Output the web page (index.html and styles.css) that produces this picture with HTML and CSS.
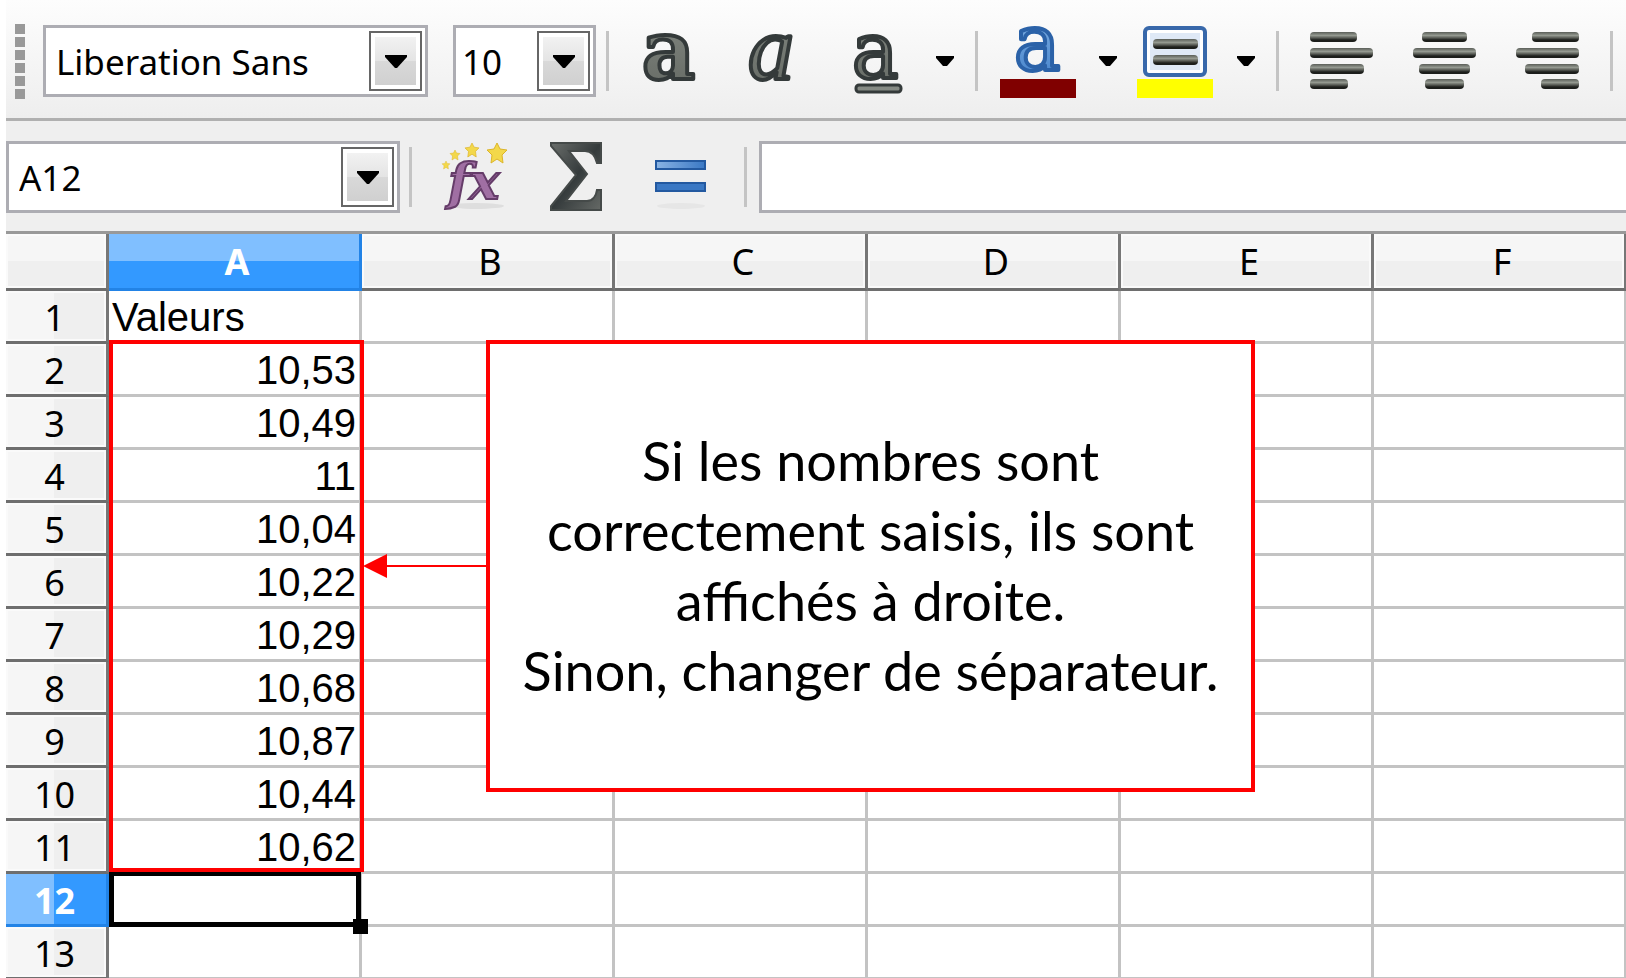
FILE: index.html
```html
<!DOCTYPE html>
<html lang="fr">
<head>
<meta charset="utf-8">
<title>Tableur</title>
<link rel="stylesheet" href="styles.css">
</head>
<body>
<svg class="defs" aria-hidden="true">
  <defs>
    <linearGradient id="steel" x1="0" y1="0" x2="0" y2="1"><stop offset="0" stop-color="#858a84"/><stop offset="1" stop-color="#646963"/></linearGradient>
    <linearGradient id="bar" x1="0" y1="0" x2="0" y2="1"><stop offset="0" stop-color="#5a5e58"/><stop offset=".35" stop-color="#949990"/><stop offset=".6" stop-color="#555852"/><stop offset=".8" stop-color="#1c1e1b"/><stop offset="1" stop-color="#1c1e1b"/></linearGradient>
    <linearGradient id="blue" x1="0" y1="0" x2="0" y2="1"><stop offset="0" stop-color="#8db9e6"/><stop offset="1" stop-color="#3f7fca"/></linearGradient>
    <linearGradient id="sum" x1="0" y1="0" x2="1" y2="1"><stop offset="0" stop-color="#6a6e6b"/><stop offset=".5" stop-color="#353b3c"/><stop offset="1" stop-color="#656966"/></linearGradient>
    <linearGradient id="eq" x1="0" y1="0" x2="1" y2="0"><stop offset="0" stop-color="#8ab4e4"/><stop offset="1" stop-color="#3a78c4"/></linearGradient>
    <path id="star" d="M0-10 3-4 10-3 5 2 6 10 0 6-6 10-5 2-10-3-3-4Z"/>
  </defs>
</svg>
<div class="app">
  <div class="toolbar format" role="toolbar" aria-label="Formatage">
    <div class="grip"><i></i><i></i><i></i><i></i><i></i><i></i></div>
    <div class="combo font-name">
      <input type="text" value="Liberation Sans" aria-label="Nom de police">
      <button class="drop" aria-label="Liste des polices"><svg width="22" height="13"><path d="M0 0H22V2L12 13H10L0 2Z"/></svg></button>
    </div>
    <div class="combo font-size">
      <input type="text" value="10" aria-label="Taille de police">
      <button class="drop" aria-label="Liste des tailles"><svg width="22" height="13"><path d="M0 0H22V2L12 13H10L0 2Z"/></svg></button>
    </div>
    <span class="sep"></span>
    <button class="tool bold" aria-label="Gras"><svg width="64" height="76"><text class="glyph bold-a" x="3" y="54">a</text></svg></button>
    <button class="tool italic" aria-label="Italique"><svg width="64" height="76"><text class="glyph italic-a" x="6" y="54">a</text></svg></button>
    <button class="tool underline" aria-label="Souligner"><svg width="64" height="76"><text class="glyph line-a" x="6" y="53">a</text><rect x="10" y="60" width="45" height="7" rx="3" fill="#858a84" stroke="#343a3a" stroke-width="3"/></svg></button>
    <button class="more" aria-label="Options de soulignement"><svg width="18" height="10"><path d="M0 0H18V2L11 10H7L0 2Z"/></svg></button>
    <span class="sep"></span>
    <button class="tool color" aria-label="Couleur de police"><svg width="76" height="76"><text class="glyph blue-a" x="14" y="45">a</text><rect y="54" width="76" height="19" fill="#800000"/></svg></button>
    <button class="more" aria-label="Autres couleurs"><svg width="18" height="10"><path d="M0 0H18V2L11 10H7L0 2Z"/></svg></button>
    <button class="tool highlight" aria-label="Couleur d'arrière-plan"><svg width="76" height="76"><rect x="8" y="3" width="60" height="47" rx="4" fill="#fff" stroke="#3868aa" stroke-width="4"/><rect x="13" y="8" width="50" height="37" fill="#dfe9f6"/><rect x="16" y="14" width="45" height="10" rx="4" fill="url(#bar)"/><rect x="16" y="30" width="45" height="10" rx="4" fill="url(#bar)"/><rect y="54" width="76" height="19" fill="#ff0"/></svg></button>
    <button class="more" aria-label="Autres arrière-plans"><svg width="18" height="10"><path d="M0 0H18V2L11 10H7L0 2Z"/></svg></button>
    <span class="sep"></span>
    <button class="tool align first" aria-label="Aligner à gauche"><svg width="63" height="76" fill="url(#bar)"><rect y="7" width="47" height="10" rx="4"/><rect y="23" width="63" height="10" rx="4"/><rect y="39" width="54" height="10" rx="4"/><rect y="54" width="38" height="10" rx="4"/></svg></button>
    <button class="tool align" aria-label="Centrer"><svg width="63" height="76" fill="url(#bar)"><rect x="9" y="7" width="45" height="10" rx="4"/><rect y="23" width="63" height="10" rx="4"/><rect x="6" y="39" width="51" height="10" rx="4"/><rect x="12" y="54" width="39" height="10" rx="4"/></svg></button>
    <button class="tool align" aria-label="Aligner à droite"><svg width="63" height="76" fill="url(#bar)"><rect x="16" y="7" width="47" height="10" rx="4"/><rect y="23" width="63" height="10" rx="4"/><rect x="9" y="39" width="54" height="10" rx="4"/><rect x="25" y="54" width="38" height="10" rx="4"/></svg></button>
    <span class="sep last"></span>
  </div>

  <div class="toolbar formula" role="toolbar" aria-label="Formule">
    <div class="combo name-box">
      <input type="text" value="A12" aria-label="Zone de nom">
      <button class="drop" aria-label="Plages nommées"><svg width="22" height="13"><path d="M0 0H22V2L12 13H10L0 2Z"/></svg></button>
    </div>
    <span class="sep"></span>
    <button class="tool fx" aria-label="Assistant fonctions"><svg width="68" height="72"><ellipse cx="34" cy="65" rx="28" ry="3" fill="#dedede"/><text class="fx-glyph" x="6" y="58">fx</text><g fill="#f3d84a" stroke="#dcb429" stroke-width="1"><use href="#star" transform="translate(55 12)"/><use href="#star" transform="translate(30 9) scale(.7)"/><use href="#star" transform="translate(13 14) scale(.5)"/><use href="#star" transform="translate(4 24) scale(.4)"/></g></svg></button>
    <button class="tool sum" aria-label="Somme"><svg width="54" height="72"><path d="M2 2H52V22H48C46 14 42 10 36 10H20L38 33 17 60H38C43 60 47 56 48 49H52V69H2V65L27 34 2 5Z" fill="url(#sum)" stroke="#454a49" stroke-width="2"/></svg></button>
    <button class="tool equal" aria-label="Égal"><svg width="52" height="72"><ellipse cx="26" cy="65" rx="24" ry="3" fill="#e6e6e6"/><rect x="1" y="20" width="49" height="8" fill="url(#eq)" stroke="#2359a0" stroke-width="2"/><rect x="1" y="42" width="49" height="8" fill="#3a78c4" stroke="#2359a0" stroke-width="2"/></svg></button>
    <span class="sep"></span>
    <input class="formula-line" type="text" aria-label="Ligne de saisie">
  </div>

  <main class="sheet">
    <table class="grid">
      <colgroup><col class="row-col"><col><col><col><col><col><col></colgroup>
      <thead><tr><th class="corner"></th><th class="active">A</th><th>B</th><th>C</th><th>D</th><th>E</th><th>F</th></tr></thead>
      <tbody>
        <tr><th>1</th><td class="text">Valeurs</td><td></td><td></td><td></td><td></td><td></td></tr>
        <tr><th>2</th><td>10,53</td><td></td><td></td><td></td><td></td><td></td></tr>
        <tr><th>3</th><td>10,49</td><td></td><td></td><td></td><td></td><td></td></tr>
        <tr><th>4</th><td>11</td><td></td><td></td><td></td><td></td><td></td></tr>
        <tr><th>5</th><td>10,04</td><td></td><td></td><td></td><td></td><td></td></tr>
        <tr><th>6</th><td>10,22</td><td></td><td></td><td></td><td></td><td></td></tr>
        <tr><th>7</th><td>10,29</td><td></td><td></td><td></td><td></td><td></td></tr>
        <tr><th>8</th><td>10,68</td><td></td><td></td><td></td><td></td><td></td></tr>
        <tr><th>9</th><td>10,87</td><td></td><td></td><td></td><td></td><td></td></tr>
        <tr><th>10</th><td>10,44</td><td></td><td></td><td></td><td></td><td></td></tr>
        <tr><th>11</th><td>10,62</td><td></td><td></td><td></td><td></td><td></td></tr>
        <tr><th class="active">12</th><td></td><td></td><td></td><td></td><td></td><td></td></tr>
        <tr><th>13</th><td></td><td></td><td></td><td></td><td></td><td></td></tr>
      </tbody>
    </table>
    <div class="cursor"></div>
    <div class="range"></div>
    <svg class="arrow" width="124" height="24"><path d="M0 12 24 0V11H124V13H24V24Z" fill="#f00"/></svg>
    <div class="callout"><p>Si les nombres sont<br>correctement saisis, ils sont<br>affichés à droite.<br>Sinon, changer de séparateur.</p></div>
  </main>
</div>
</body>
</html>
```
FILE: styles.css
```css
* { box-sizing: border-box; }
body { margin: 0; background: #fff; color: #000; font-family: "Noto Sans", sans-serif; font-size: 36px; }
button { padding: 0; border: 0; background: none; }
svg { display: block; overflow: visible; }
.defs { position: absolute; width: 0; height: 0; }
.app { display: flex; flex-direction: column; height: 100vh; padding-left: 6px; overflow: hidden; }

.toolbar { display: flex; flex: none; align-items: center; }
.format { height: 121px; border-bottom: 3px solid #b0b0b0; background: linear-gradient(#fdfdfd, #eee); padding: 4px 0 0 9px; }
.formula { height: 113px; padding-top: 2px; border-bottom: 3px solid #999; background: #efefef; }
.toolbar > * { flex: none; }

.grip { display: flex; flex-direction: column; gap: 3px; margin-right: 18px; }
.grip i { width: 10px; height: 10px; background: #999; }

.combo { display: flex; align-items: center; height: 72px; padding-right: 3px; border: 3px solid #adadb3; background: #fff; }
.combo input { flex: 1; min-width: 0; height: 100%; padding: 0 0 0 10px; border: 0; outline: 0; background: none; color: #000; font: 35px "Noto Sans", sans-serif; }
.drop { display: grid; place-items: center; width: 53px; height: 60px; padding: 4px; border: 2px solid #666; background: linear-gradient(#f2f2f2, #e4e4e4 50%, #d9d9d9 50%, #d0d0d0) content-box #fff; }
.font-name { width: 385px; margin-right: 25px; }
.font-size { width: 143px; margin-right: 10px; }
.name-box { width: 394px; margin-right: 9px; }
.font-size input { padding-left: 6px; }

.sep { width: 3px; height: 60px; background: #c4c4c4; }
.format .tool { margin-top: 3px; }
.format .more { margin-bottom: 4px; }
.bold { margin-left: 30px; }
.italic { margin-left: 39px; }
.underline { margin-left: 40px; }
.underline + .more { margin: 0 21px 0 26px; }
.color { margin-left: 22px; }
.color + .more { margin: 0 20px 0 23px; }
.highlight + .more { margin: 0 21px 0 24px; }
.align { margin-left: 40px; }
.align.first { margin-left: 31px; }
.sep.last { margin-left: 31px; }

.glyph { fill: url(#steel); stroke: #343a3a; stroke-width: 4px; stroke-linejoin: round; }
.bold-a { font: bold 82px "DejaVu Serif", serif; }
.line-a { font: 78px "DejaVu Serif", serif; }
.italic-a { font: italic 92px "Liberation Serif", serif; }
.blue-a { font: 78px "DejaVu Serif", serif; fill: url(#blue); stroke: #2b62a8; }
.fx-glyph { font: italic bold 50px "DejaVu Serif", serif; fill: #a06fa3; stroke: #653c69; stroke-width: 2px; }
.fx { margin-left: 30px; }
.sum { margin-left: 39px; }
.equal { margin: 0 37px 0 52px; }
.formula .sep + .formula-line { flex: 1; min-width: 0; height: 72px; margin-left: 12px; padding: 0 10px; border: 3px solid #adadb3; border-right: 0; outline: 0; background: #fff; font: 35px "Noto Sans", sans-serif; }

.sheet { position: relative; flex: 1; min-height: 0; overflow: hidden; }
.grid { width: calc(100% + 1px); table-layout: fixed; border-collapse: separate; border-spacing: 0; }
.row-col { width: 103px; }
.grid th, .grid td { height: 53px; padding: 3px 0 0; line-height: 47px; }
.grid th { padding-right: 3px; border-right: 3px solid #777; border-bottom: 3px solid #6e6e6e; background: linear-gradient(90deg, #f6f6f6 48%, #efefef 48%); box-shadow: inset 0 0 0 2px #fafafa; font-weight: 400; }
.grid thead th { height: 57px; padding: 0 0 0 6px; background: linear-gradient(#f6f6f6 50%, #efefef 50%); }
.grid td { padding-right: 3px; padding-left: 3px; border-right: 3px solid #c3c3c3; border-bottom: 3px solid #c3c3c3; font-family: "Liberation Sans", sans-serif; font-size: 40px; text-align: right; }
.grid td.text { text-align: left; }
.grid th.active { border-color: #2283e6; background: linear-gradient(90deg, #80bfff 48%, #39f 48%); box-shadow: none; color: #fff; font-weight: 700; }
.grid thead th.active { background: linear-gradient(#80bfff 50%, #39f 50%); }

.range { position: absolute; left: 103px; top: 106px; width: 255px; height: 532px; border: 4px solid #f00; }
.cursor { position: absolute; left: 103px; top: 637px; width: 252px; height: 56px; border: 5px solid #000; }
.cursor::after { content: ""; position: absolute; right: -12px; bottom: -12px; width: 15px; height: 15px; background: #000; }
.arrow { position: absolute; left: 357px; top: 320px; }
.callout { position: absolute; left: 480px; top: 106px; display: grid; place-items: center; width: 769px; height: 452px; border: 4px solid #f00; background: #fff; }
.callout p { margin: 0; font-family: Lato, sans-serif; font-size: 54px; line-height: 70px; text-align: center; white-space: nowrap; }
```
